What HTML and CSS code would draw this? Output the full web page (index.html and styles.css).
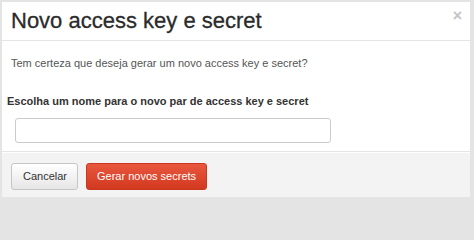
FILE: index.html
```html
<!DOCTYPE html>
<html lang="pt">
<head>
<meta charset="utf-8">
<link rel="stylesheet" href="styles.css">
</head>
<body>
<div class="frame">
  <div class="modal">
    <div class="modal-header">
      <h1 class="title">Novo access key e secret</h1>
      <span class="close">&times;</span>
    </div>
    <div class="modal-body">
      <p class="question">Tem certeza que deseja gerar um novo access key e secret?</p>
      <label class="label">Escolha um nome para o novo par de access key e secret</label>
      <input class="input" type="text">
    </div>
    <div class="modal-footer">
      <button class="btn btn-default">Cancelar</button>
      <button class="btn btn-danger">Gerar novos secrets</button>
    </div>
  </div>
</div>
</body>
</html>
```
FILE: styles.css
```css
html, body {
  margin: 0;
  padding: 0;
  background: #e4e4e4;
}
body {
  width: 474px;
  height: 201px;
  font-family: "Liberation Sans", Arial, sans-serif;
  overflow: hidden;
}
.frame {
  padding: 2px 4px 4px 2px;
  height: 201px;
  box-sizing: border-box;
}
.modal {
  background: #fff;
  height: 100%;
  display: flex;
  flex-direction: column;
}
.modal-header {
  display: flex;
  align-items: flex-start;
  justify-content: space-between;
  height: 38px;
  border-bottom: 1px solid #e5e5e5;
  padding: 0 8px 0 9px;
}
.title {
  margin: 0;
  font-size: 22px;
  font-weight: normal;
  color: #2b2b2b;
  line-height: 32px;
  padding-top: 3px;
  -webkit-text-stroke: 0.3px #2b2b2b;
}
.close {
  color: #c4c4c4;
  font-size: 16px;
  font-weight: bold;
  line-height: 20px;
  padding-top: 4px;
}
.modal-body {
  flex: 1;
  display: flex;
  flex-direction: column;
  padding: 0 0 0 5px;
  border-bottom: 1px solid #e5e5e5;
}
.question {
  margin: 14px 0 0 4px;
  font-size: 11px;
  color: #555;
  line-height: 16px;
}
.label {
  margin-top: 22px;
  font-size: 11px;
  font-weight: bold;
  color: #333;
  line-height: 16px;
}
.input {
  margin: 9px 0 0 8px;
  width: 316px;
  height: 25px;
  box-sizing: border-box;
  border: 1px solid #ccc;
  border-radius: 3px;
  background: #fff;
}
.modal-footer {
  height: 45px;
  background: #f3f3f3;
  border-top: 1px solid #fff;
  display: flex;
  align-items: center;
  gap: 8px;
  padding: 2px 9px 0;
  box-sizing: border-box;
}
.btn {
  height: 27px;
  font-family: "Liberation Sans", Arial, sans-serif;
  font-size: 11px;
  border-radius: 3px;
  padding: 0 10px;
  cursor: pointer;
}
.btn-default {
  background: linear-gradient(#fff, #e6e6e6);
  border: 1px solid #c6c6c6;
  color: #333;
  padding: 0 10px 0 11px;
}
.btn-danger {
  background: linear-gradient(#e8573f, #d2391f);
  border: 1px solid #c9371f;
  color: #fff;
  padding: 0 10px;
}
```
